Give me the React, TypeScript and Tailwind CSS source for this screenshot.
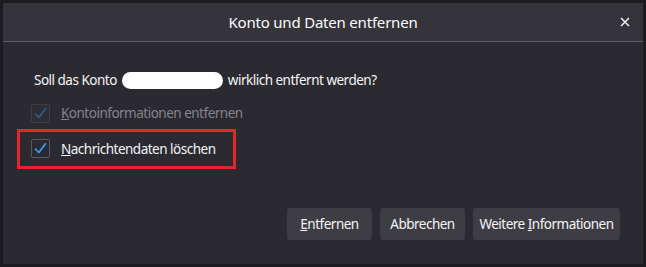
import React from 'react'

const Check = ({ disabled }: { disabled?: boolean }) => (
    <span
        className={`flex h-[19px] w-[19px] shrink-0 items-center justify-center rounded-[2px] border ${
            disabled ? 'border-[#3f3e46] bg-[#2e2d35]' : 'border-[#5b5a62] bg-[#2b2a33]'
        }`}
    >
        <svg width="13" height="13" viewBox="0 0 13 13" fill="none">
            <path
                d="M1.5 7 L4.8 10.5 L11.5 1.8"
                stroke={disabled ? '#2c5f86' : '#3aa0f0'}
                strokeWidth="1.7"
                strokeLinecap="round"
                strokeLinejoin="round"
            />
        </svg>
    </span>
)

const Button = ({ children, w }: { children: React.ReactNode; w: string }) => (
    <button
        className={`h-8 rounded-[3px] bg-[#3e3d44] text-[13.5px] tracking-[-0.5px] text-[#f4f4f7] ${w}`}
    >
        {children}
    </button>
)

export default function App() {
    return (
        <div className="h-[267px] w-[646px] bg-[#1c1b20] p-[3px] font-['Noto_Sans',sans-serif]">
            <div className="flex h-[261px] w-[640px] flex-col bg-[#2b2a31]">
                <div className="relative flex h-[39px] items-center justify-center border-b border-[#5f5e64] bg-[#35343a]">
                    <span className="text-[15px] tracking-[-0.2px] text-[#fbfbfe]">
                        Konto und Daten entfernen
                    </span>
                    <svg
                        className="absolute right-[13px] top-[14px]"
                        width="10"
                        height="10"
                        viewBox="0 0 10 10"
                    >
                        <path d="M1 1 L9 9 M9 1 L1 9" stroke="#f4f4f7" strokeWidth="1.5" />
                    </svg>
                </div>
                <div className="flex flex-1 flex-col pl-[28px] pr-[23px] text-[13.5px] tracking-[-0.5px]">
                    <p className="mt-[28px] flex items-center text-[#f4f4f7]">
                        <span className="ml-[3px]">Soll das Konto</span>
                        <span className="mx-[5px] inline-block h-[17px] w-[101px] rounded-full bg-white" />
                        wirklich entfernt werden?
                    </p>
                    <label className="mt-[13px] flex items-center gap-[11px] text-[#84838b]">
                        <Check disabled />
                        <span>
                            <u>K</u>ontoinformationen entfernen
                        </span>
                    </label>
                    <div className="-ml-[14px] mt-[5px] w-[219px] border-[3px] border-[#e5242b] py-[7px] pl-[11px]">
                        <label className="flex items-center gap-[11px] text-[#f4f4f7]">
                            <Check />
                            <span>
                                <u>N</u>achrichtendaten löschen
                            </span>
                        </label>
                    </div>
                    <div className="mt-auto mb-[24px] flex justify-end gap-2">
                        <Button w="w-[85px]">
                            <u>E</u>ntfernen
                        </Button>
                        <Button w="w-[85px]">Abbrechen</Button>
                        <Button w="w-[147px]">
                            Weitere <u>I</u>nformationen
                        </Button>
                    </div>
                </div>
            </div>
        </div>
    )
}
